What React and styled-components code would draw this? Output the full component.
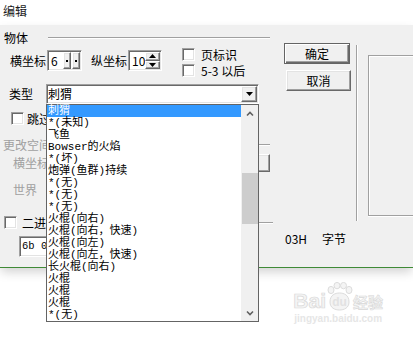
import React from "react";
import styled, { createGlobalStyle, css } from "styled-components";

const items = [
  "刺猬",
  "*(未知)",
  "飞鱼",
  "Bowser的火焰",
  "*(坏)",
  "炮弹(鱼群)持续",
  "*(无)",
  "*(无)",
  "*(无)",
  "火棍(向右)",
  "火棍(向右，快速)",
  "火棍(向左)",
  "火棍(向左，快速)",
  "长火棍(向右)",
  "火棍",
  "火棍",
  "火棍",
  "*(无)",
];

const Chevron = ({ down }) => (
  <svg width="8" height="6" viewBox="0 0 8 6">
    <path
      d={down ? "M1 1.5 L4 4.5 L7 1.5" : "M1 4.5 L4 1.5 L7 4.5"}
      fill="none"
      stroke="#606060"
      strokeWidth="1.6"
    />
  </svg>
);

const Tri = ({ up }) => (
  <svg width="7" height="4" viewBox="0 0 7 4">
    <polygon points={up ? "0,4 7,4 3.5,0" : "0,0 7,0 3.5,4"} fill="#000" />
  </svg>
);

const Paw = () => (
  <svg width="27" height="29" viewBox="0 0 27 29">
    <g fill="#f4f4f4" stroke="#dcdcdc" strokeWidth="1">
      <ellipse cx="5" cy="8" rx="3" ry="3.6" />
      <ellipse cx="11" cy="3.6" rx="3" ry="3.2" />
      <ellipse cx="17.5" cy="3.6" rx="3" ry="3.2" />
      <ellipse cx="23" cy="8" rx="3" ry="3.6" />
      <path d="M4 20 C4 13 9 11 13.5 11 C18 11 23 13 23 20 C23 26 18 28 13.5 28 C9 28 4 26 4 20 Z" />
    </g>
    <text
      x="13.5"
      y="24"
      textAnchor="middle"
      fontFamily="Liberation Sans, sans-serif"
      fontWeight="700"
      fontSize="12"
      fill="#e2e2e2"
    >
      du
    </text>
  </svg>
);

const App = () => {
  return (
    <Page>
      <GlobalStyle />
      <TitleBar>编辑</TitleBar>
      <Dialog>
        <Top>
          <LeftCol>
            <GroupHead>
              <span>物体</span>
              <Rule $gap={20} />
            </GroupHead>
            <CoordRow>
              <FieldLabel>横坐标</FieldLabel>
              <Spin $width={35}>
                <SpinField>6</SpinField>
                <DotBtn />
                <DotBtn />
              </Spin>
              <FieldLabel $gap={9}>纵坐标</FieldLabel>
              <Spin $width={34}>
                <SpinField>10</SpinField>
                <ArrowStack>
                  <ArrowBtn>
                    <Tri up />
                  </ArrowBtn>
                  <ArrowBtn>
                    <Tri />
                  </ArrowBtn>
                </ArrowStack>
              </Spin>
              <CheckCol>
                <CheckItem>
                  <Check />
                  <span>页标识</span>
                </CheckItem>
                <CheckItem>
                  <Check />
                  <span>5-3 以后</span>
                </CheckItem>
              </CheckCol>
            </CoordRow>
            <TypeRow>
              <TypeLabel>类型</TypeLabel>
              <Combo>
                <ComboText>刺猬</ComboText>
                <DropBtn>
                  <Tri />
                </DropBtn>
                <DropList>
                  <Items>
                    {items.map((t, i) => (
                      <Item key={i} $selected={i === 0}>
                        {t}
                      </Item>
                    ))}
                  </Items>
                  <ScrollBar>
                    <ScrollArrow>
                      <Chevron />
                    </ScrollArrow>
                    <Thumb />
                    <ScrollArrow $bottom>
                      <Chevron down />
                    </ScrollArrow>
                  </ScrollBar>
                </DropList>
              </Combo>
            </TypeRow>
            <SkipRow>
              <Check />
              <span>跳过</span>
            </SkipRow>
            <GroupHead $disabled $top={13} $pad={3}>
              <span>更改空间</span>
              <Rule $gap={2} />
            </GroupHead>
            <SubRow $top={2}>
              <span>横坐标</span>
              <DimButton />
            </SubRow>
            <SubRow $top={9}>
              <span>世界</span>
            </SubRow>
          </LeftCol>
          <ButtonCol>
            <PushButton $default>确定</PushButton>
            <PushButton $shift={2}>取消</PushButton>
          </ButtonCol>
          <Separator />
          <Preview />
        </Top>
        <BinHead>
          <Check />
          <BinText>二进</BinText>
          <Rule $gap={2} />
        </BinHead>
        <BinRow>
          <BinInput>6b 0</BinInput>
          <ByteLabel>
            <span>03H</span>
            <span>字节</span>
          </ByteLabel>
        </BinRow>
      </Dialog>
      <Footer>
        <Watermark>
          <LogoRow>
            <Mark>Bai</Mark>
            <Paw />
            <MarkCn>经验</MarkCn>
          </LogoRow>
          <Domain>jingyan.baidu.com</Domain>
        </Watermark>
      </Footer>
    </Page>
  );
};

export default App;

const GlobalStyle = createGlobalStyle`
  html, body {
    margin: 0;
    padding: 0;
    background: #fff;
  }
  body {
    font-family: "Noto Sans CJK SC", "Noto Sans", sans-serif;
    font-size: 12px;
    color: #000;
  }
  * {
    box-sizing: border-box;
  }
`;

const sunken = css`
  border: 1px solid;
  border-color: #a0a0a0 #fff #fff #a0a0a0;
  box-shadow: inset 1px 1px 0 #696969, inset -1px -1px 0 #e3e3e3;
  padding: 1px;
  background: #fff;
`;

const raised = css`
  border: 1px solid;
  border-color: #fff #696969 #696969 #fff;
  box-shadow: inset -1px -1px 0 #a0a0a0, inset 1px 1px 0 #e3e3e3;
  background: #f0f0f0;
`;

const Page = styled.div`
  width: 413px;
  height: 337px;
  overflow: hidden;
  background: #fff;
`;

const TitleBar = styled.div`
  height: 25px;
  padding: 3px 0 0 3px;
  line-height: 16px;
  font-size: 12px;
  color: #1a1a1a;
`;

const Dialog = styled.div`
  height: 243px;
  background: #f0f0f0;
  border-bottom: 1px solid #3f8a36;
  box-shadow: 0 5px 10px -1px rgba(0, 0, 0, 0.18);
  position: relative;
`;

const Top = styled.div`
  height: 191px;
  display: flex;
  align-items: flex-start;
`;

const LeftCol = styled.div`
  width: 270px;
  flex: none;
  display: flex;
  flex-direction: column;
`;

const GroupHead = styled.div`
  display: flex;
  align-items: center;
  height: 14px;
  line-height: 14px;
  margin-top: ${(p) => p.$top ?? 6}px;
  padding-left: ${(p) => p.$pad ?? 4}px;
  color: ${(p) => (p.$disabled ? "#a0a0a0" : "#000")};
`;

const Rule = styled.div`
  flex: 1;
  height: 2px;
  margin-left: ${(p) => p.$gap}px;
  border-top: 1px solid #a0a0a0;
  border-bottom: 1px solid #fff;
`;

const CoordRow = styled.div`
  display: flex;
  align-items: flex-start;
  height: 28px;
  margin-top: 3px;
  padding-left: 10px;
`;

const FieldLabel = styled.span`
  margin-top: 2px;
  margin-left: ${(p) => p.$gap ?? 0}px;
  line-height: 21px;
`;

const Spin = styled.div`
  ${sunken};
  width: ${(p) => p.$width}px;
  height: 21px;
  margin: 2px 0 0 1px;
  display: flex;
`;

const SpinField = styled.div`
  flex: 1;
  padding-left: 2px;
  line-height: 17px;
  font-size: 12px;
`;

const DotBtn = styled.div`
  ${raised};
  width: 8px;
  margin-left: 1px;
  display: flex;
  align-items: center;
  justify-content: center;
  &::after {
    content: "";
    width: 2px;
    height: 2px;
    background: #000;
  }
`;

const ArrowStack = styled.div`
  width: 16px;
  display: flex;
  flex-direction: column;
`;

const ArrowBtn = styled.div`
  ${raised};
  flex: 1;
  display: flex;
  align-items: center;
  justify-content: center;
`;

const CheckCol = styled.div`
  margin-left: 20px;
  display: flex;
  flex-direction: column;
  gap: 3px;
`;

const CheckItem = styled.div`
  display: flex;
  align-items: center;
  gap: 6px;
  height: 13px;
  line-height: 13px;
  white-space: nowrap;
`;

const Check = styled.span`
  width: 13px;
  height: 13px;
  flex: none;
  background: #fff;
  border: 1px solid;
  border-color: #a0a0a0 #fff #fff #a0a0a0;
  box-shadow: inset 1px 1px 0 #696969, inset -1px -1px 0 #e3e3e3;
`;

const TypeRow = styled.div`
  display: flex;
  height: 20px;
  margin-top: 8px;
  padding-left: 9px;
`;

const TypeLabel = styled.span`
  width: 37px;
  line-height: 20px;
`;

const Combo = styled.div`
  ${sunken};
  position: relative;
  width: 213px;
  height: 20px;
  display: flex;
  padding: 1px 0 1px 1px;
`;

const ComboText = styled.div`
  flex: 1;
  line-height: 16px;
  font-size: 12px;
`;

const DropBtn = styled.div`
  ${raised};
  width: 16px;
  height: 16px;
  margin-right: 1px;
  display: flex;
  align-items: center;
  justify-content: center;
`;

const DropList = styled.div`
  position: absolute;
  top: 19px;
  left: -1px;
  width: 213px;
  height: 218px;
  border: 1px solid #646464;
  background: #fff;
  display: flex;
  z-index: 10;
`;

const Items = styled.div`
  flex: 1;
  display: flex;
  flex-direction: column;
`;

const Item = styled.div`
  height: 12px;
  line-height: 12px;
  padding-left: 1px;
  font-family: "Liberation Mono", "Noto Sans CJK SC", monospace;
  font-size: 11px;
  white-space: nowrap;
  background: ${(p) => (p.$selected ? "#3399ff" : "transparent")};
  color: ${(p) => (p.$selected ? "#fff" : "#000")};
`;

const ScrollBar = styled.div`
  width: 17px;
  background: #f0f0f0;
  display: flex;
  flex-direction: column;
`;

const ScrollArrow = styled.div`
  height: 17px;
  display: flex;
  align-items: center;
  justify-content: center;
  margin-top: ${(p) => (p.$bottom ? "auto" : "0")};
`;

const Thumb = styled.div`
  height: 51px;
  margin: 51px 0 0 1px;
  background: #cdcdcd;
`;

const SkipRow = styled.div`
  display: flex;
  align-items: center;
  gap: 3px;
  height: 13px;
  line-height: 13px;
  margin-top: 8px;
  padding-left: 11px;
`;

const SubRow = styled.div`
  display: flex;
  height: 18px;
  line-height: 18px;
  margin-top: ${(p) => p.$top}px;
  padding-left: 13px;
  color: #a0a0a0;
`;

const DimButton = styled.div`
  ${raised};
  margin-left: auto;
  width: 60px;
  height: 18px;
`;

const ButtonCol = styled.div`
  width: 67px;
  flex: none;
  margin-left: 14px;
  padding-top: 18px;
  display: flex;
  flex-direction: column;
  gap: 6px;
`;

const PushButton = styled.div`
  ${raised};
  width: 65px;
  height: 21px;
  margin-left: ${(p) => p.$shift ?? 0}px;
  display: flex;
  align-items: center;
  justify-content: center;
  line-height: 1;
  ${(p) =>
    p.$default &&
    css`
      width: 66px;
      border-color: #646464;
      box-shadow: inset 1px 1px 0 #fff, inset -1px -1px 0 #696969,
        inset -2px -2px 0 #a0a0a0;
    `}
`;

const Separator = styled.div`
  width: 2px;
  height: 176px;
  flex: none;
  margin: 20px 0 0 5px;
  border-left: 1px solid #a0a0a0;
  border-right: 1px solid #fff;
`;

const Preview = styled.div`
  flex: 1;
  height: 161px;
  margin: 30px 0 0 10px;
  border: 1px solid #a0a0a0;
  border-right: none;
  box-shadow: inset 1px 1px 0 #fff, 0 1px 0 #fff;
`;

const BinHead = styled.div`
  width: 273px;
  height: 13px;
  display: flex;
  align-items: center;
  padding-left: 4px;
`;

const BinText = styled.span`
  margin-left: 5px;
  line-height: 13px;
`;

const BinRow = styled.div`
  display: flex;
  align-items: flex-start;
  margin-top: 4px;
  padding-left: 19px;
`;

const BinInput = styled.div`
  ${sunken};
  width: 220px;
  height: 21px;
  margin-top: 3px;
  padding-left: 2px;
  line-height: 17px;
  font-family: "Liberation Mono", monospace;
  font-size: 10.5px;
  white-space: nowrap;
`;

const ByteLabel = styled.div`
  margin-left: 46px;
  display: flex;
  gap: 15px;
  line-height: 12px;
  font-size: 12px;
`;

const Footer = styled.div`
  display: flex;
  justify-content: flex-end;
  padding: 14px 30px 0 0;
`;

const Watermark = styled.div`
  display: flex;
  flex-direction: column;
  align-items: center;
`;

const LogoRow = styled.div`
  display: flex;
  align-items: flex-end;
`;

const Mark = styled.span`
  font-family: "Liberation Sans", sans-serif;
  font-weight: 700;
  font-size: 21px;
  line-height: 20px;
  color: #f4f4f4;
  -webkit-text-stroke: 0.7px #d8d8d8;
`;

const MarkCn = styled.span`
  font-size: 15px;
  line-height: 18px;
  font-weight: 700;
  color: #f4f4f4;
  -webkit-text-stroke: 0.6px #d8d8d8;
`;

const Domain = styled.div`
  margin-top: 2px;
  font-family: "Liberation Sans", sans-serif;
  font-weight: 700;
  font-size: 10px;
  line-height: 12px;
  color: #e6e6e6;
`;
